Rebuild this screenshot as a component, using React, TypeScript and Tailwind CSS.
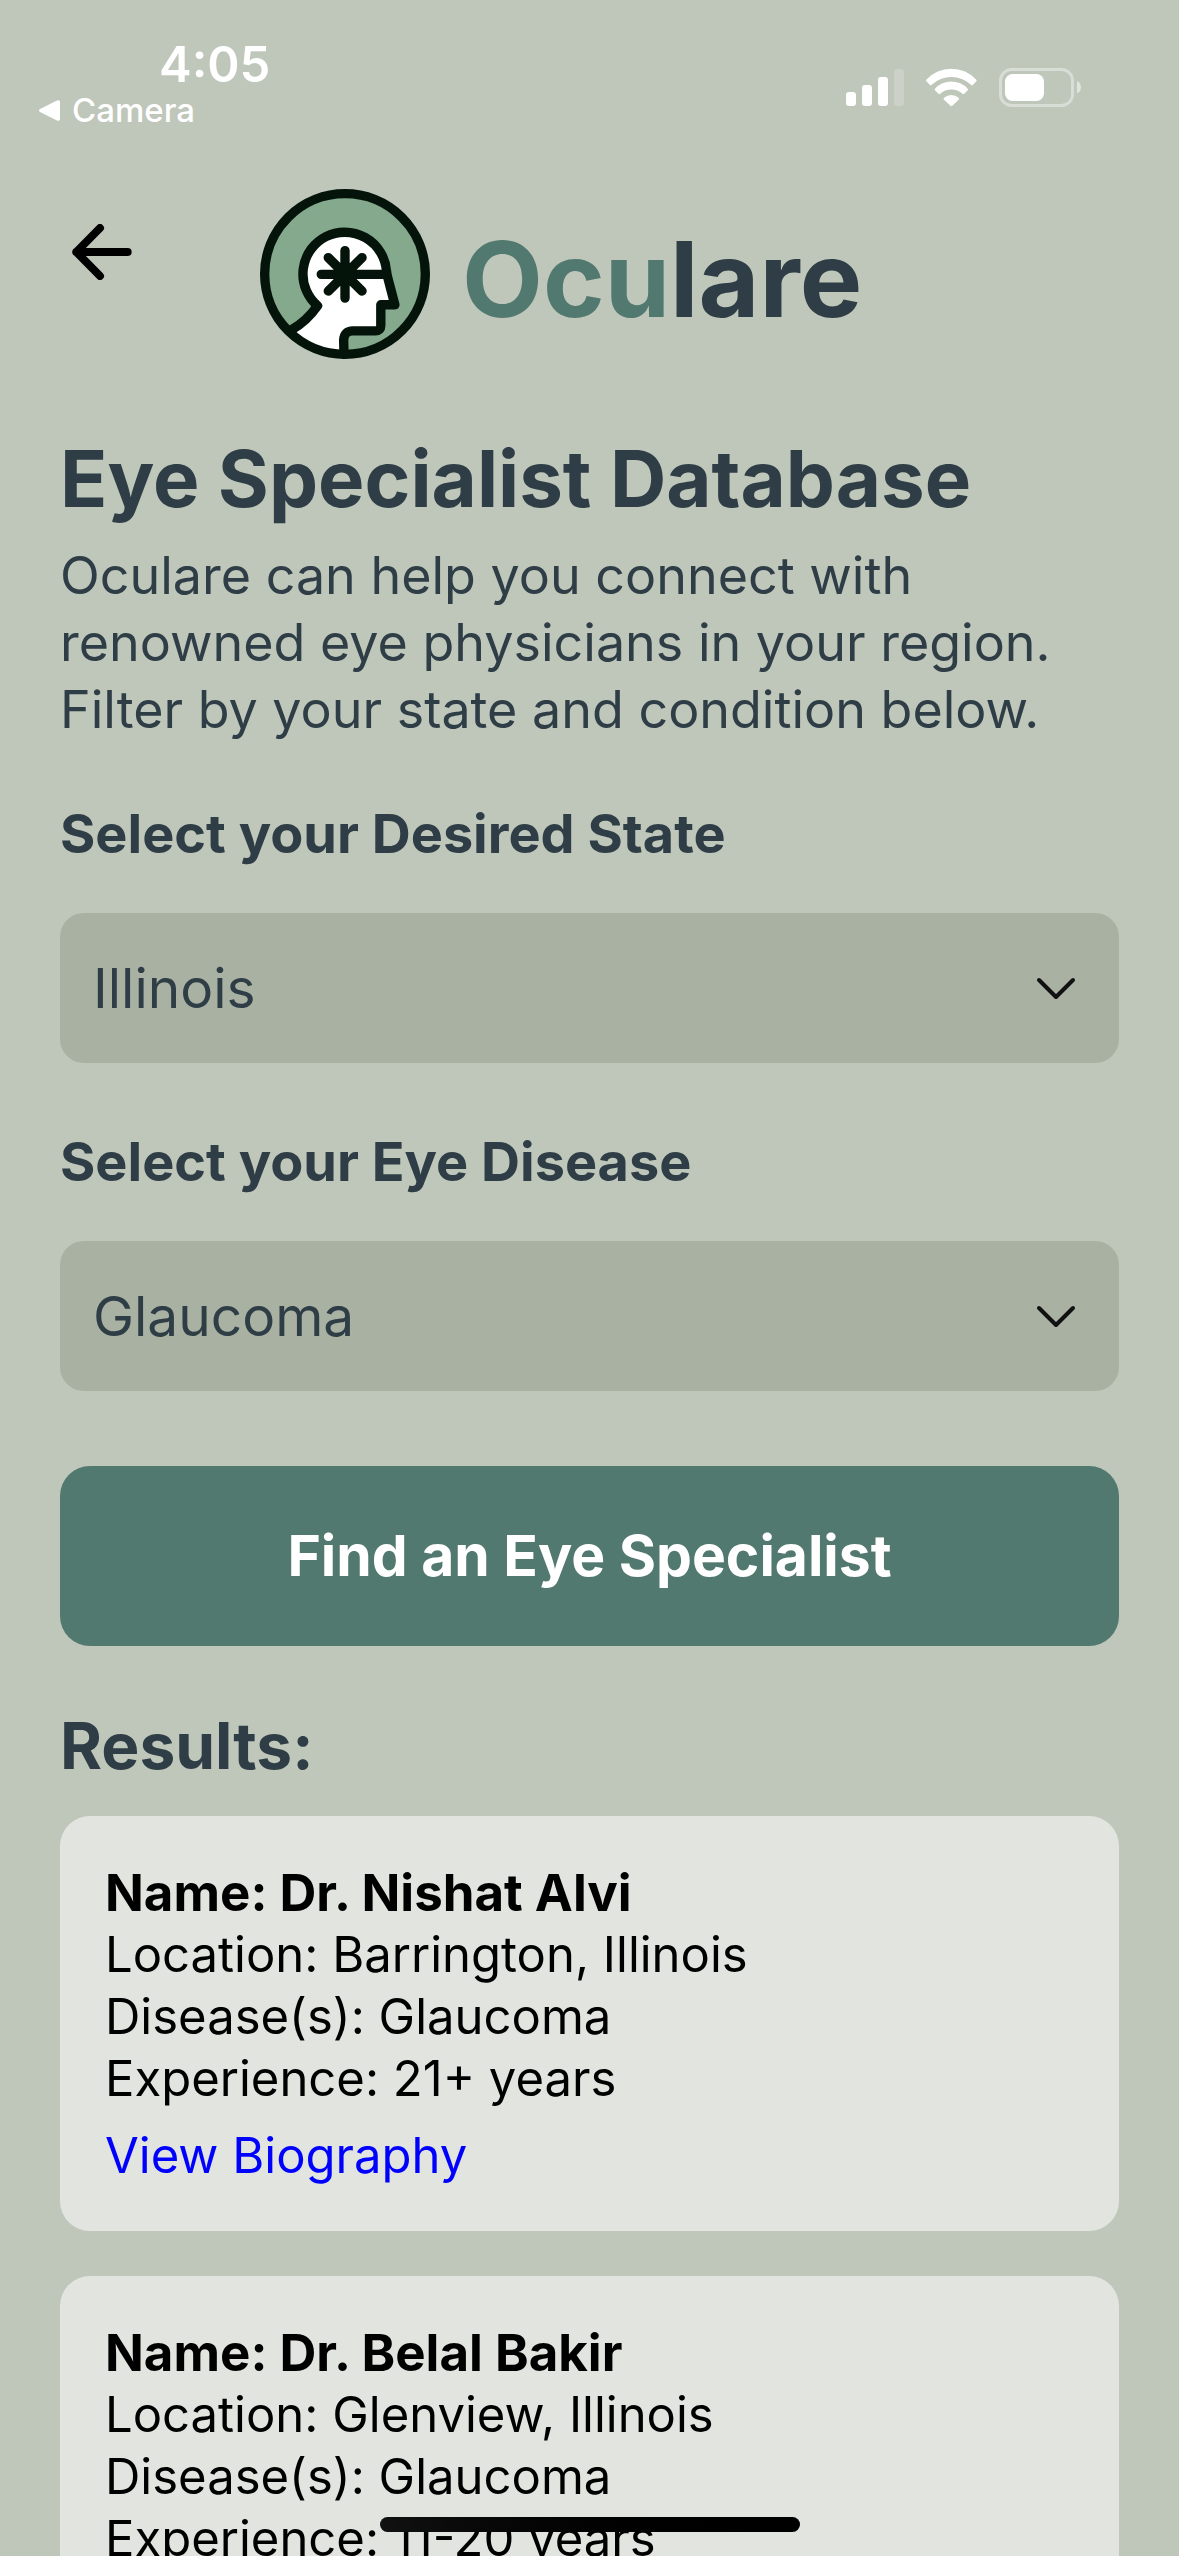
import { useState } from 'react'

type Doctor = {
  name: string
  location: string
  diseases: string
  experience: string
}

const STATES = ['Illinois', 'Indiana', 'Iowa', 'Michigan', 'Wisconsin']
const DISEASES = ['Glaucoma', 'Cataracts', 'Macular Degeneration', 'Diabetic Retinopathy']

const DOCTORS: Doctor[] = [
  {
    name: 'Dr. Nishat Alvi',
    location: 'Barrington, Illinois',
    diseases: 'Glaucoma',
    experience: '21+ years',
  },
  {
    name: 'Dr. Belal Bakir',
    location: 'Glenview, Illinois',
    diseases: 'Glaucoma',
    experience: '11-20 years',
  },
]

function StatusIcons() {
  return (
    <svg viewBox="138 114 705 117" className="h-[39px] w-[235px]" fill="#fff" role="img" aria-label="Signal, Wi-Fi and battery">
      <rect x="138" y="186" width="30" height="42" rx="9" />
      <rect x="186" y="165" width="30" height="63" rx="9" />
      <rect x="234" y="141" width="30" height="87" rx="9" />
      <rect x="282" y="117" width="30" height="111" rx="9" opacity="0.2" />
      <path d="M379 149a102 102 0 0 1 150 0q2 3 0 5l-10 10q-3 3-6 0a87 87 0 0 0-118 0q-3 3-6 0l-10-10q-2-2 0-5z" />
      <path d="M405 176a66 66 0 0 1 98 0q2 3 0 5l-10 10q-3 2-6 0a50 50 0 0 0-66 0q-3 2-6 0l-10-10q-2-2 0-5z" />
      <path d="M432 203a34 34 0 0 1 44 0q3 3 0 6l-19 18q-3 2-6 0l-19-18q-3-3 0-6z" />
      <rect x="601.5" y="118.5" width="216" height="108" rx="33" fill="none" stroke="#fff" strokeWidth="9" opacity="0.4" />
      <rect x="615" y="132" width="117" height="81" rx="23" />
      <path d="M831 153c16 6 16 31 0 37z" opacity="0.5" />
    </svg>
  )
}

function StatusBar() {
  return (
    <div className="flex shrink-0 items-start justify-between pt-10 pr-[98px] pl-[39px] text-white">
      <div>
        <div className="pl-[120px] text-[49px] leading-[50px] font-semibold">4:05</div>
        <button type="button" className="flex items-center gap-3 text-[33px] leading-10 font-medium">
          <svg viewBox="0 0 21 21" className="size-[21px]" fill="#fff" aria-hidden="true">
            <path d="M1 9 18 .6q3-1 3 1.4v17q0 2.4-3 1.4L1 12q-2-1.5 0-3z" />
          </svg>
          Camera
        </button>
      </div>
      <div className="pt-7">
        <StatusIcons />
      </div>
    </div>
  )
}

function Logo() {
  return (
    <svg viewBox="60 58 508 508" className="size-[170px]" role="img" aria-label="Oculare logo">
      <circle cx="314" cy="312" r="240" fill="#84a98c" />
      <path
        d="M154 479C188 460 213 434 232 407A125 125 0 1 1 438 303L440 316 463 404H421V466Q421 482 405 482H338Q311 482 310 510L311 552A240 240 0 0 1 154 479Z"
        fill="#fff"
      />
      <g fill="none" stroke="#04140a" strokeWidth="28" strokeLinecap="round" strokeLinejoin="round">
        <path d="M154 479C188 460 213 434 232 407A125 125 0 1 1 438 303L440 316 463 404H421V466Q421 482 405 482H338Q311 482 310 510L311 552" />
        <path d="M243 313H438M314 242V384M264 263l101 100M365 263 264 363" />
        <circle cx="314" cy="312" r="240" />
      </g>
      <circle cx="314" cy="313" r="36" fill="#04140a" />
    </svg>
  )
}

function SelectField({ id, label, options }: { id: string; label: string; options: string[] }) {
  const [value, setValue] = useState(options[0])
  return (
    <div className="flex flex-col gap-[47px]">
      <label htmlFor={id} className="text-[54px] leading-[64px] font-bold">
        {label}
      </label>
      <div className="relative">
        <select
          id={id}
          value={value}
          onChange={(e) => setValue(e.target.value)}
          className="block h-[150px] w-full appearance-none rounded-3xl bg-[#a8b1a2] pr-[100px] pl-[33px] text-[55px] text-[#2f3e46]"
        >
          {options.map((o) => (
            <option key={o}>{o}</option>
          ))}
        </select>
        <div className="pointer-events-none absolute inset-y-0 right-[43px] flex items-center">
          <svg viewBox="0 0 40 24" className="h-6 w-10" fill="none" stroke="#111" strokeWidth="4" strokeLinecap="round" strokeLinejoin="round" aria-hidden="true">
            <path d="M3 4 20 21 37 4" />
          </svg>
        </div>
      </div>
    </div>
  )
}

function DoctorCard({ doctor }: { doctor: Doctor }) {
  return (
    <article className="rounded-[30px] bg-[#e2e5df] px-[45px] pt-[46px] pb-11 text-[49px] leading-[62px] text-black">
      <h3 className="text-[51px] font-bold">Name: {doctor.name}</h3>
      <p>Location: {doctor.location}</p>
      <p>Disease(s): {doctor.diseases}</p>
      <p>Experience: {doctor.experience}</p>
      <a href="#biography" className="mt-[15px] block text-[#0000ff]">
        View Biography
      </a>
    </article>
  )
}

export default function App() {
  return (
    <div className="flex h-screen flex-col overflow-hidden bg-[#bfc6ba] font-['Inter',sans-serif] text-[#2f3e46]">
      <StatusBar />
      <div className="flex-1 overflow-y-auto px-[60px] pt-[59px] [scrollbar-width:none]">
        <header className="flex items-end">
          <button type="button" aria-label="Back" className="flex h-[126px] w-21 items-center justify-center self-start">
            <svg viewBox="97 102 178 168" className="h-14 w-[60px]" fill="none" stroke="#000" strokeWidth="24" strokeLinecap="round" strokeLinejoin="round" aria-hidden="true">
              <path d="M263 186H109M180 114l-71 72 71 72" />
            </svg>
          </button>
          <div className="ml-[116px] flex items-end gap-8">
            <Logo />
            <div className="text-[105px] leading-[160px] font-bold">
              <span className="text-[#52796f]">Ocu</span>lare
            </div>
          </div>
        </header>

        <main className="mt-[73px]">
          <h1 className="text-[78px] leading-[94px] font-bold">Eye Specialist Database</h1>
          <p className="mt-4 text-[52px] leading-[67px]">
            Oculare can help you connect with renowned eye physicians in your region. Filter by your state and condition below.
          </p>

          <form className="mt-[59px] flex flex-col gap-[67px]" onSubmit={(e) => e.preventDefault()}>
            <SelectField id="state" label="Select your Desired State" options={STATES} />
            <SelectField id="disease" label="Select your Eye Disease" options={DISEASES} />
            <button type="submit" className="mt-2 h-[180px] rounded-[30px] bg-[#52796f] text-[57px] font-bold text-white">
              Find an Eye Specialist
            </button>
          </form>

          <section className="mt-[62px]">
            <h2 className="text-[64px] leading-[76px] font-bold">Results:</h2>
            <div className="mt-8 flex flex-col gap-[45px] pb-[90px]">
              {DOCTORS.map((d) => (
                <DoctorCard key={d.name} doctor={d} />
              ))}
            </div>
          </section>
        </main>
      </div>
      <div className="fixed bottom-6 left-1/2 h-[15px] w-[420px] -translate-x-1/2 rounded-full bg-linear-to-r from-[#111] to-black" />
    </div>
  )
}
